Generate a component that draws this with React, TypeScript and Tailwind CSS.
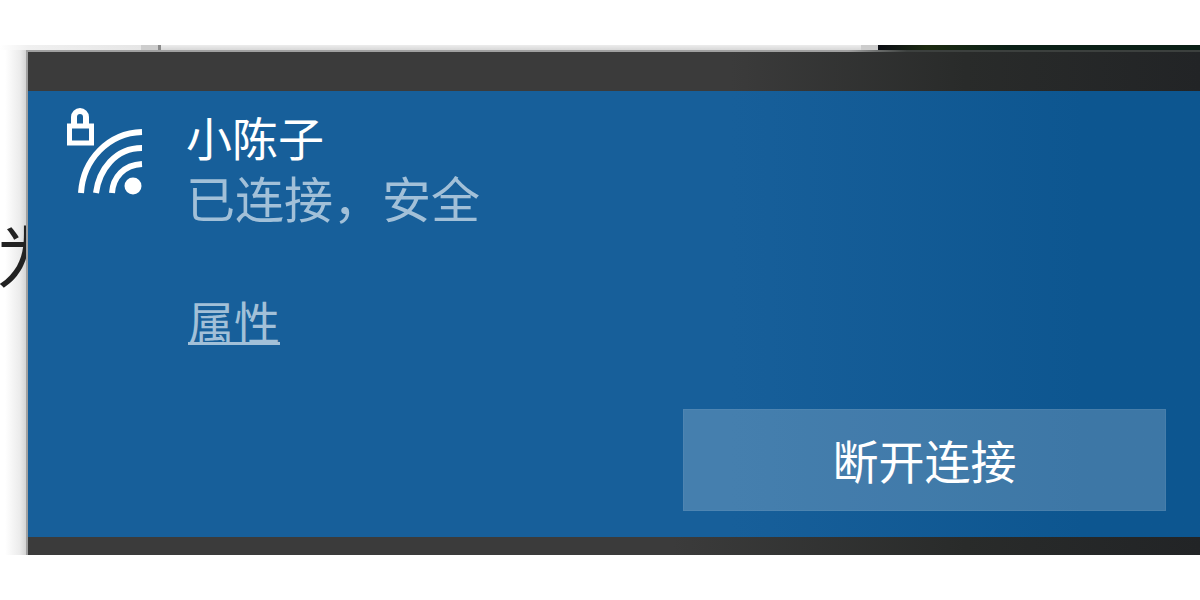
import React from 'react';

const SecureWifiIcon: React.FC = () => (
  <svg viewBox="0 0 78 88" className="w-[78px] h-[88px] shrink-0" fill="none" stroke="#ffffff" aria-hidden="true">
    <rect x="3.5" y="19" width="22" height="17" strokeWidth="5" />
    <path d="M8 18V10a6 6 0 0 1 12 0V18" strokeWidth="6" />
    <path d="M15 86C17 53 42 26 76 25" strokeWidth="6" />
    <path d="M30 86C33 63 49 41 76 41" strokeWidth="6" />
    <path d="M46 86C47 70 58 58 76 57" strokeWidth="6" />
    <circle cx="67" cy="79" r="8.5" fill="#ffffff" stroke="none" />
  </svg>
);

// the windows that show above the flyout
const BackgroundStrip: React.FC = () => (
  <div className="flex h-[5px]">
    <div className="w-[141px] bg-linear-to-r from-white via-[#f0f0f0] via-20% to-[#e6e6e6]" />
    <div className="w-[17px] bg-[#cdcdcd]" />
    <div className="w-[3px] bg-[#8a8a8a]" />
    <div className="w-[700px] bg-linear-to-b from-[#ececec] to-[#d8d8d8]" />
    <div className="w-[17px] bg-[#cccccc]" />
    <div className="flex-1 bg-linear-to-r from-[#0a0c12] via-[#1c2a10] via-15% to-[#0a2016] to-40%" />
  </div>
);

const NetworkPanel: React.FC = () => (
  <main className="bg-linear-to-r from-[#175f9a] from-60% to-[#0d5690] to-90% pl-[38px] pr-[34px] pt-4 pb-[26px]">
    <div className="flex gap-[42px]">
      <SecureWifiIcon />
      <div>
        <h1 className="text-[46px] leading-[58px] text-white">小陈子</h1>
        <p className="text-[49px] leading-[64px] text-[#a2c0d8]">已连接，安全</p>
        <a
          href="#properties"
          className="inline-block mt-[62px] ml-[2px] text-[46px] leading-[58px] text-[#a2c0d8] underline decoration-[3px] underline-offset-2"
        >
          属性
        </a>
      </div>
    </div>
    <div className="flex justify-end mt-[60px]">
      <button
        type="button"
        className="w-[483px] h-[102px] pb-[3px] bg-white/20 border border-white/5 text-[46px] leading-[58px] text-white"
      >
        断开连接
      </button>
    </div>
  </main>
);

const App: React.FC = () => {
  return (
    <div className="bg-white py-[45px] overflow-hidden font-['Noto_Sans_CJK_SC',sans-serif] font-normal">
      <BackgroundStrip />
      <div className="flex">
        <div className="relative w-[28px] shrink-0 overflow-hidden bg-linear-to-r from-white from-20% via-[#ececec] via-75% to-[#d4d4d4] border-r-2 border-[#a0a0a0]">
          <span className="absolute -left-1 top-[159px] text-[68px] leading-[90px] text-[#222222]">为</span>
        </div>
        <div className="flex-1 min-w-0">
          <div className="h-[2px] bg-linear-to-r from-[#a0a0a0] from-70% to-[#3c403e] to-75%" />
          <div className="h-[39px] bg-linear-to-r from-[#3b3b3b] from-60% via-[#292b2a] via-80% to-[#222426]" />
          <NetworkPanel />
          <div className="h-[18px] bg-linear-to-r from-[#3b3b3b] from-55% via-[#292b2a] via-80% to-[#222426]" />
        </div>
      </div>
    </div>
  );
};

export default App;
